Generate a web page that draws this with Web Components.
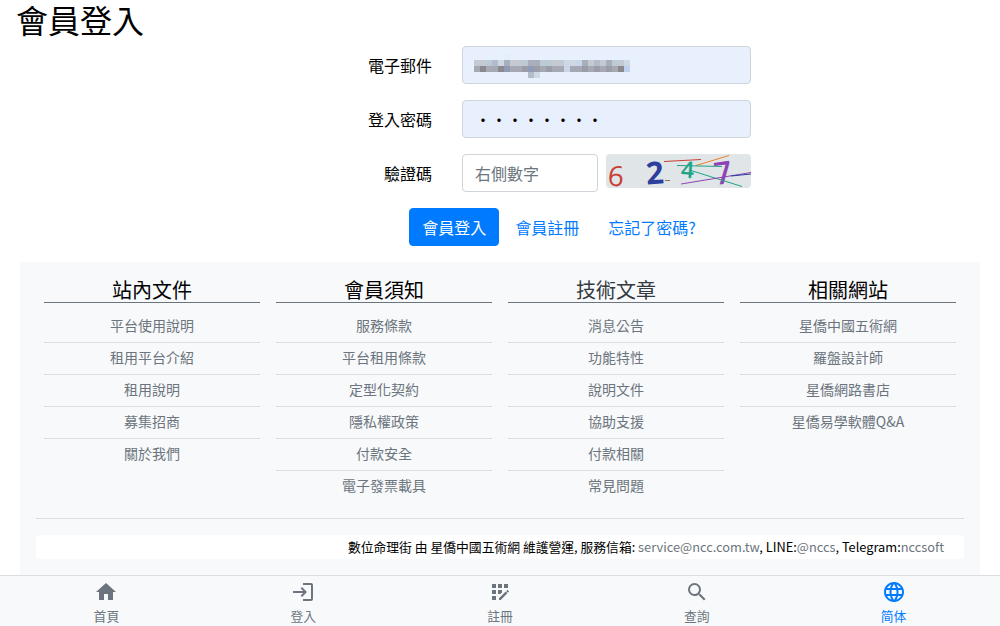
<!DOCTYPE html>
<html lang="zh-Hant">
<head>
<meta charset="utf-8">
<meta name="viewport" content="width=device-width, initial-scale=1">
<title>會員登入</title>
<style>
  *, *::before, *::after { box-sizing: border-box; }
  body {
    margin: 0;
    background: #fff;
    color: #000;
    font: 400 16px/24px "Noto Sans CJK TC", "Noto Sans", sans-serif;
    --muted: #6c757d;
    --primary: #007bff;
    --surface: #f8f9fb;
    --line: #dadde1;
  }
</style>
</head>
<body>
<member-page>
  <span slot="title">會員登入</span>
  <login-form></login-form>
  <site-footer>
    <link-column heading="站內文件">
      <a href="#guide">平台使用說明</a>
      <a href="#intro">租用平台介紹</a>
      <a href="#rent">租用說明</a>
      <a href="#partners">募集招商</a>
      <a href="#about">關於我們</a>
    </link-column>
    <link-column heading="會員須知">
      <a href="#service-terms">服務條款</a>
      <a href="#rent-terms">平台租用條款</a>
      <a href="#contract">定型化契約</a>
      <a href="#privacy">隱私權政策</a>
      <a href="#pay-safety">付款安全</a>
      <a href="#invoice">電子發票載具</a>
    </link-column>
    <link-column heading="技術文章" soft>
      <a href="#news">消息公告</a>
      <a href="#features">功能特性</a>
      <a href="#docs">說明文件</a>
      <a href="#support">協助支援</a>
      <a href="#payment">付款相關</a>
      <a href="#faq">常見問題</a>
    </link-column>
    <link-column heading="相關網站">
      <a href="#ncc">星僑中國五術網</a>
      <a href="#compass">羅盤設計師</a>
      <a href="#books">星僑網路書店</a>
      <a href="#qa">星僑易學軟體Q&amp;A</a>
    </link-column>
    <contact-note slot="note"></contact-note>
  </site-footer>
  <tab-bar slot="tabs">
    <tab-item icon="home" href="#home">首頁</tab-item>
    <tab-item icon="login" href="#login">登入</tab-item>
    <tab-item icon="register" href="#register">註冊</tab-item>
    <tab-item icon="search" href="#search">查詢</tab-item>
    <tab-item icon="globe" href="#zh-cn" active>简体</tab-item>
  </tab-bar>
</member-page>

<script>
const define = (name, html, setup) => customElements.define(name, class extends HTMLElement {
  constructor() {
    super();
    const root = this.attachShadow({ mode: 'open' });
    root.innerHTML = '<style>*,*::before,*::after{box-sizing:border-box}</style>' + html;
  }
  connectedCallback() { if (setup) setup(this, this.shadowRoot); }
});

define('member-page', `
  <style>
    :host { display: block; }
    h1 { margin: 0; padding: 0 16px 8px; font-size: 32px; line-height: 38px; font-weight: 400; }
    main { padding-bottom: 52px; }
  </style>
  <main>
    <h1><slot name="title"></slot></h1>
    <slot></slot>
  </main>
  <slot name="tabs"></slot>`);

define('captcha-image', `
  <style>
    :host { display: block; height: 34px; border-radius: 4px; background: #e0e5e7; }
    svg { display: block; width: 100%; height: 100%; overflow: visible; }
    text { font-family: "Open Sans", sans-serif; }
  </style>
  <svg viewBox="0 0 145 34" role="img" aria-label="驗證碼圖片">
    <text x="2" y="32" font-size="28" fill="#c93f35" transform="rotate(4 9 22)">6</text>
    <text x="40" y="30" font-size="31" font-weight="700" fill="#2c3e9e" transform="rotate(-4 49 19)">2</text>
    <text x="75" y="24" font-size="23" font-weight="600" fill="#1fa487" transform="rotate(4 82 16)">4</text>
    <text x="108" y="30" font-size="31" font-weight="600" fill="#8e44b4" transform="rotate(-8 116 18)">7</text>
    <g fill="none" stroke-width="1">
      <path d="M58 7.500L95 5.500" stroke="#c93f35"/>
      <path d="M90 11.500L123 1.500" stroke="#f08020"/>
      <path d="M71 11.500L116 12.500M85 16.500L136 32.500" stroke="#1fa487"/>
      <path d="M75 30L145 18.500" stroke="#8e44b4"/>
      <path d="M125 22L145 20" stroke="#2c3e9e"/>
      <path d="M59 26.500H64" stroke="#93705c"/>
    </g>
  </svg>`);

define('masked-address', `
  <style>
    :host { display: block; pointer-events: none; }
    svg { display: block; }
  </style>
  <svg width="156" height="24" viewBox="0 0 156 24" shape-rendering="crispEdges" aria-hidden="true"></svg>`,
  (host, root) => {
    // One string per 6px row; each letter picks a shade, a dot leaves the cell empty.
    const rows = [
      '.....a....................',
      'eedfcgeedggddeeccbgefegdec',
      'hkhhkihhjijhjhhbhhjhjhjhkm',
      '.........fc...............'
    ];
    const shades = { a: '#e4edfc', b: '#c9d6ea', c: '#ced7e4', d: '#bccad6', e: '#c4c9d2',
      f: '#b4bccb', g: '#a8afba', h: '#a6a9b3', i: '#8f9bb6', j: '#9a9da7', k: '#8a8a8e', m: '#c0d1ee' };
    root.querySelector('svg').innerHTML = rows.map((row, y) => [...row].map((c, x) =>
      shades[c] ? `<rect x="${x * 6}" y="${y * 6}" width="6" height="6" fill="${shades[c]}"/>` : ''
    ).join('')).join('');
  });

define('login-form', `
  <style>
    :host { display: block; }
    form { display: grid; grid-template-columns: 447fr 319fr 234fr; row-gap: 16px; }
    label { grid-column: 1; padding-right: 15px; text-align: right; line-height: 38px; }
    .field { grid-column: 2; position: relative; display: grid; gap: 8px; padding: 0 15px; }
    .captcha { grid-template-columns: minmax(0, 136fr) minmax(0, 145fr); }
    input {
      min-width: 0; width: 100%; height: 38px; padding: 6px 12px;
      font: inherit; color: #000; background: #fff;
      border: 1px solid #ced4da; border-radius: 4px; outline: 0;
    }
    input::placeholder { color: var(--muted); opacity: 1; }
    input.filled { background: #e8f0fe; }
    masked-address { position: absolute; left: 27px; top: 8px; }
    .actions { grid-column: 1 / -1; display: flex; justify-content: center; gap: 3px; padding-left: 118px; }
    button, a {
      font: inherit; padding: 6px 12px; border: 1px solid transparent; border-radius: 4px;
    }
    button { color: #fff; background: var(--primary); border-color: var(--primary); }
    a { color: var(--primary); text-decoration: none; }
  </style>
  <form>
    <label for="email">電子郵件</label>
    <div class="field"><input id="email" class="filled" type="email"><masked-address></masked-address></div>
    <label for="password">登入密碼</label>
    <div class="field"><input id="password" class="filled" type="password" value="12345678"></div>
    <label for="code">驗證碼</label>
    <div class="field captcha"><input id="code" type="text" placeholder="右側數字"><captcha-image></captcha-image></div>
    <div class="actions">
      <button type="button">會員登入</button>
      <a href="#register">會員註冊</a>
      <a href="#forgot">忘記了密碼?</a>
    </div>
  </form>`);

define('site-footer', `
  <style>
    :host { display: block; margin: 16px 20px 0; padding: 16px 16px 24px; border-radius: 4px; background: var(--surface); }
    .columns { display: grid; grid-template-columns: repeat(4, 1fr); gap: 16px; padding: 0 8px; }
    hr { margin: 16px 0; border: 0; border-top: 1px solid var(--line); }
  </style>
  <div class="columns"><slot></slot></div>
  <hr>
  <slot name="note"></slot>`);

define('link-column', `
  <style>
    :host { display: block; text-align: center; }
    h2 { margin: 0 0 8px; border-bottom: 1px solid var(--muted); font-size: 20px; line-height: 24px; font-weight: 400; }
    :host([soft]) h2 { color: #343a40; }
    nav { font-size: 14px; line-height: 21px; }
    ::slotted(a) { display: block; padding: 4px 0 6px; color: var(--muted); text-decoration: none; border-bottom: 1px solid var(--line); }
    ::slotted(a:last-child) { border-bottom: 0; }
  </style>
  <h2></h2>
  <nav><slot></slot></nav>`,
  (host, root) => { root.querySelector('h2').textContent = host.getAttribute('heading'); });

define('contact-note', `
  <style>
    :host { display: block; padding: 0 20px; border-radius: 4px; background: #fff; text-align: right; font-size: 80%; line-height: 24px; }
    a { color: var(--muted); text-decoration: none; }
    a.plain { color: inherit; }
  </style>
  數位命理街 由 <a class="plain" href="#ncc">星僑中國五術網</a> 維護營運, 服務信箱: <a href="mailto:service@ncc.com.tw">service@ncc.com.tw</a>, LINE:<a href="#line">@nccs</a>, Telegram:<a href="#telegram">nccsoft</a>`);

define('tab-bar', `
  <style>
    :host { display: block; position: fixed; inset: auto 0 0; }
    nav { display: flex; padding: 4px 8px 0; border-top: 1px solid var(--line); background: var(--surface); }
  </style>
  <nav><slot></slot></nav>`);

const icons = {
  home: 'M10 20v-6h4v6h5v-8h3L12 3 2 12h3v8z',
  login: 'M11 7 9.600 8.400l2.600 2.600H2v2h10.200l-2.600 2.600L11 17l5-5zM20 19h-8v2h8c1.100 0 2-.9 2-2V5c0-1.100-.9-2-2-2h-8v2h8z',
  register: 'M10 4h4v4h-4zM4 16h4v4H4zM4 10h4v4H4zM4 4h4v4H4zM14 12.420V10h-4v4h2.420zM20.880 11.290l-1.170-1.170c-.16-.16-.42-.16-.58 0L18.250 11 20 12.750l.88-.88c.16-.16.16-.42 0-.58zM11 18.250V20h1.750l6.670-6.670-1.750-1.750zM16 4h4v4h-4z',
  search: 'M15.500 14h-.79l-.28-.27A6.471 6.471 0 0 0 16 9.500 6.500 6.500 0 1 0 9.500 16c1.610 0 3.090-.59 4.230-1.570l.27.28v.79l5 4.990L20.490 19l-4.990-5zm-6 0C7.010 14 5 11.990 5 9.500S7.010 5 9.500 5 14 7.010 14 9.500 11.990 14 9.500 14z',
  globe: 'M11.990 2C6.470 2 2 6.480 2 12s4.470 10 9.990 10C17.520 22 22 17.520 22 12S17.520 2 11.990 2zm6.930 6h-2.950c-.32-1.250-.78-2.450-1.380-3.560 1.840.63 3.370 1.910 4.330 3.560zM12 4.040c.83 1.200 1.480 2.530 1.910 3.960h-3.820c.43-1.430 1.080-2.760 1.910-3.960zM4.260 14C4.100 13.360 4 12.690 4 12s.1-1.360.26-2h3.380c-.08.66-.14 1.320-.14 2s.06 1.340.14 2H4.260zm.82 2h2.950c.32 1.250.78 2.450 1.380 3.560-1.840-.63-3.370-1.900-4.330-3.560zm2.950-8H5.080c.96-1.660 2.490-2.930 4.330-3.560C8.810 5.550 8.350 6.750 8.030 8zM12 19.960c-.83-1.200-1.480-2.530-1.910-3.960h3.820c-.43 1.430-1.080 2.760-1.910 3.960zM14.340 14H9.660c-.09-.66-.16-1.320-.16-2s.07-1.350.16-2h4.680c.09.65.16 1.320.16 2s-.07 1.340-.16 2zm.25 5.560c.6-1.110 1.060-2.310 1.380-3.560h2.950c-.96 1.650-2.490 2.930-4.330 3.560zM16.360 14c.08-.66.14-1.320.14-2s-.06-1.340-.14-2h3.380c.16.64.26 1.310.26 2s-.1 1.360-.26 2h-3.380z'
};

define('tab-item', `
  <style>
    :host { display: block; flex: 1; color: var(--muted); font-size: 80%; line-height: 20px; }
    :host([active]) { color: var(--primary); }
    a { display: flex; flex-direction: column; align-items: center; gap: 2px; color: inherit; text-decoration: none; }
    svg { display: block; width: 24px; height: 24px; fill: currentColor; }
  </style>
  <a><svg viewBox="0 0 24 24" aria-hidden="true"><path/></svg><span><slot></slot></span></a>`,
  (host, root) => {
    root.querySelector('a').setAttribute('href', host.getAttribute('href'));
    root.querySelector('path').setAttribute('d', icons[host.getAttribute('icon')]);
  });
</script>
</body>
</html>
